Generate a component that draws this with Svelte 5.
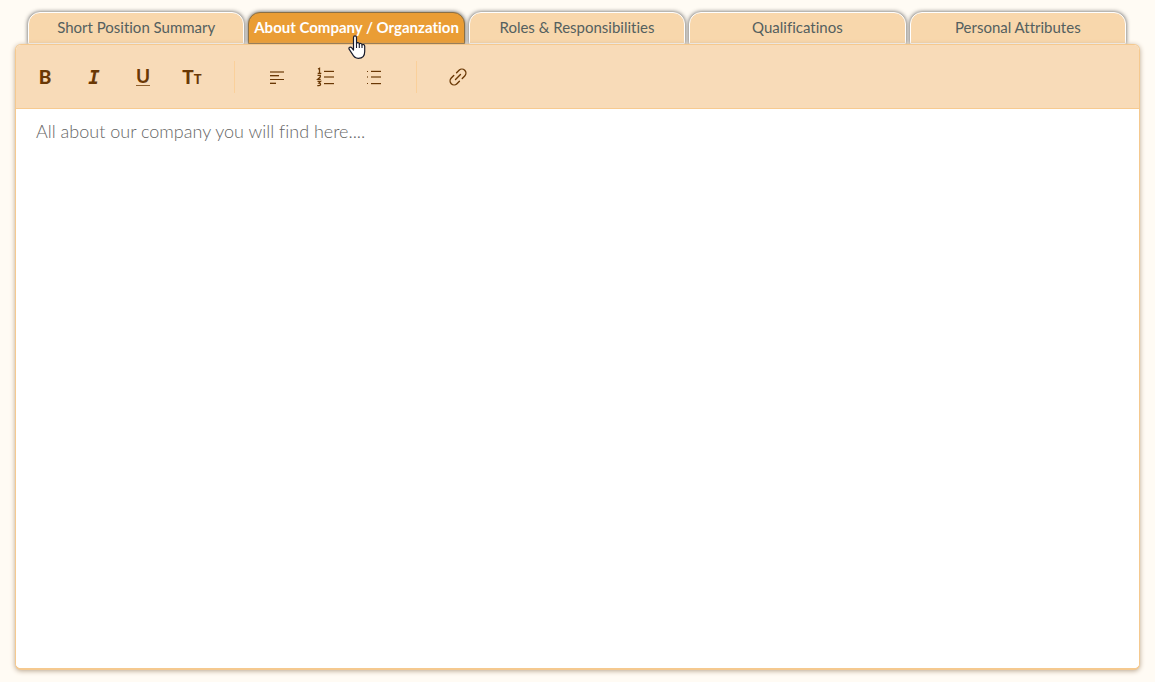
<script>
  const tabs = [
    'Short Position Summary',
    'About Company / Organzation',
    'Roles & Responsibilities',
    'Qualificatinos',
    'Personal Attributes'
  ];
  let active = $state(1);
  let body = $state('');
</script>

<main>
  <div class="tabs" role="tablist">
    {#each tabs as tab, i}
      <button type="button" role="tab" class="tab" class:active={active === i} aria-selected={active === i} onclick={() => (active = i)}>
        {tab}
      </button>
    {/each}
  </div>

  <section class="panel">
    <div class="toolbar" role="toolbar">
      <div class="group text-group">
        <button type="button" class="tool bold" aria-label="Bold">B</button>
        <button type="button" class="tool italic" aria-label="Italic">I</button>
        <button type="button" class="tool underline" aria-label="Underline"><span>U</span></button>
        <button type="button" class="tool size" aria-label="Text size">T<small>T</small></button>
      </div>
      <div class="group list-group">
        <button type="button" class="tool" aria-label="Align">
          <svg width="20" height="20" viewBox="0 0 20 20">
            <path d="M3 4h14v2H3z" opacity=".6" />
            <path d="M3 8h9v1H3zM3 12h14v1H3zM3 16h6v1H3z" />
            <path d="M3 9h9v1H3zM3 15h6v1H3z" opacity=".35" />
          </svg>
        </button>
        <button type="button" class="tool" aria-label="Numbered list">
          <svg width="20" height="20" viewBox="0 0 20 20">
            <g fill="none" stroke="#6a3805" stroke-width="1.3">
              <path d="M2 2l1.500-.7V6.500M1.700 6.400h3.600" />
              <path d="M1.500 8.400h2.800v1.500L1.700 12.300h3" />
              <path d="M1.500 14.300h3L3 16c2.200 0 2 2.700 0 2.700H1.300" />
            </g>
            <path d="M8 4h10v1H8zM8 16h10v1H8z" />
            <path d="M8 9h10v2H8z" opacity=".6" />
            <path d="M8 3h10v1H8zM8 17h10v1H8z" opacity=".2" />
          </svg>
        </button>
        <button type="button" class="tool" aria-label="Bulleted list">
          <svg width="20" height="20" viewBox="0 0 20 20">
            <path d="M2 4h1v1H2zM6 4h10v1H6zM2 16h1v1H2zM6 16h10v1H6z" />
            <path d="M2 9h1v2H2zM6 9h10v2H6z" opacity=".6" />
            <path d="M6 3h10v1H6zM6 17h10v1H6z" opacity=".2" />
          </svg>
        </button>
      </div>
      <div class="group">
        <button type="button" class="tool" aria-label="Link">
          <svg width="20" height="20" viewBox="0 0 20 20">
            <g fill="none" stroke="#6a3805" stroke-width="1.4" stroke-linecap="round" transform="rotate(-45 10 10)">
              <path d="M8 6H4.500a4 4 0 0 0 0 8H8M12 6h3.500a4 4 0 0 1 0 8H12M6.500 10h7" />
            </g>
          </svg>
        </button>
      </div>
    </div>
    <textarea bind:value={body} aria-label={tabs[active]} placeholder="All about our company you will find here...."></textarea>
  </section>

  <svg class="pointer" width="20" height="26" viewBox="0 0 20 26" aria-hidden="true">
    <path d="M5.500 2.500c0-2.200 3-2.200 3 0v6c.3-1.300 2.800-1.200 2.800.6.500-1.100 2.700-.9 2.700.9.700-.9 2.700-.5 2.700 1.200v5.300c0 4-2.300 6.800-6.300 6.800-3.300 0-4.900-1.600-6.200-4.500L1.100 14.200c-.9-2 1.500-2.800 2.700-1.300l1.700 2.200z" fill="#fff" stroke="#181b2c" stroke-width="1.200" stroke-linejoin="round" />
    <path d="M8.500 8v5M11.300 9v4M14 10v3" fill="none" stroke="#181b2c" stroke-width="1.100" />
  </svg>
</main>

<style>
  :global(body) {
    margin: 0;
    background: #fffbf4;
  }

  main {
    box-sizing: border-box;
    display: flex;
    flex-direction: column;
    min-height: 100vh;
    padding: 12px 15px;
    font-family: Lato, sans-serif;
    font-variant-ligatures: none;
  }

  button {
    margin: 0;
    padding: 0;
    border: 0;
    background: none;
    font-family: inherit;
    font-variant-ligatures: inherit;
    cursor: pointer;
  }

  .tabs {
    display: grid;
    grid-template-columns: repeat(5, minmax(0, 1fr));
    gap: 4px;
    padding: 0 14px 0 13px;
  }

  .tab {
    height: 32px;
    padding-bottom: 2px;
    border: 1px solid #fff;
    border-radius: 12px 12px 0 0;
    background: #f8d7ac;
    box-shadow: 0 0 4px #555;
    color: #54605f;
    font-size: 15px;
    line-height: 28px;
    white-space: nowrap;
  }

  .tab.active {
    border-color: #8b7046;
    background: #ea9d35;
    color: #fff;
    font-weight: 700;
  }

  .panel {
    position: relative;
    display: flex;
    flex: 1;
    flex-direction: column;
    overflow: hidden;
    border: 1px solid #f5c98f;
    border-bottom-width: 2px;
    border-radius: 6px;
    background: #fff;
    box-shadow: 0 1px 5px #b9a58e;
  }

  .toolbar {
    display: flex;
    align-items: center;
    height: 63px;
    border-bottom: 1px solid #f7ca90;
    background: #f8dbb8;
  }

  .group {
    display: flex;
    align-items: center;
    gap: 17px;
    height: 32px;
    padding: 0 25px;
    border-right: 1px solid #fad09b;
  }

  .text-group {
    padding: 0 26px 0 13px;
  }

  .list-group {
    padding: 0 25px 0 26px;
  }

  .group:last-child {
    border: 0;
  }

  .tool {
    display: flex;
    align-items: center;
    justify-content: center;
    width: 32px;
    height: 32px;
    color: #6a3805;
    font-size: 19px;
    line-height: 20px;
  }

  .tool svg {
    fill: #6a3805;
  }

  .bold {
    font-weight: 900;
  }

  .italic {
    font-family: "DejaVu Sans Mono", monospace;
    font-style: italic;
    font-weight: 700;
  }

  .underline {
    font-weight: 700;
  }

  .underline span {
    border-bottom: 1px solid #8f602f;
    line-height: 18px;
  }

  .size {
    align-items: baseline;
    font-weight: 900;
    line-height: 32px;
  }

  .size small {
    font-size: 13px;
  }

  textarea {
    display: block;
    box-sizing: border-box;
    flex: 1;
    width: 100%;
    padding: 10px 20px;
    border: 0;
    outline: 0;
    background: #fff;
    color: #555;
    font-family: inherit;
    font-size: 18px;
    font-variant-ligatures: inherit;
    font-weight: 300;
    line-height: 24px;
    resize: none;
  }

  textarea::placeholder {
    color: #666;
    opacity: 1;
  }

  .pointer {
    position: absolute;
    top: 35px;
    left: 348px;
    pointer-events: none;
  }
</style>
